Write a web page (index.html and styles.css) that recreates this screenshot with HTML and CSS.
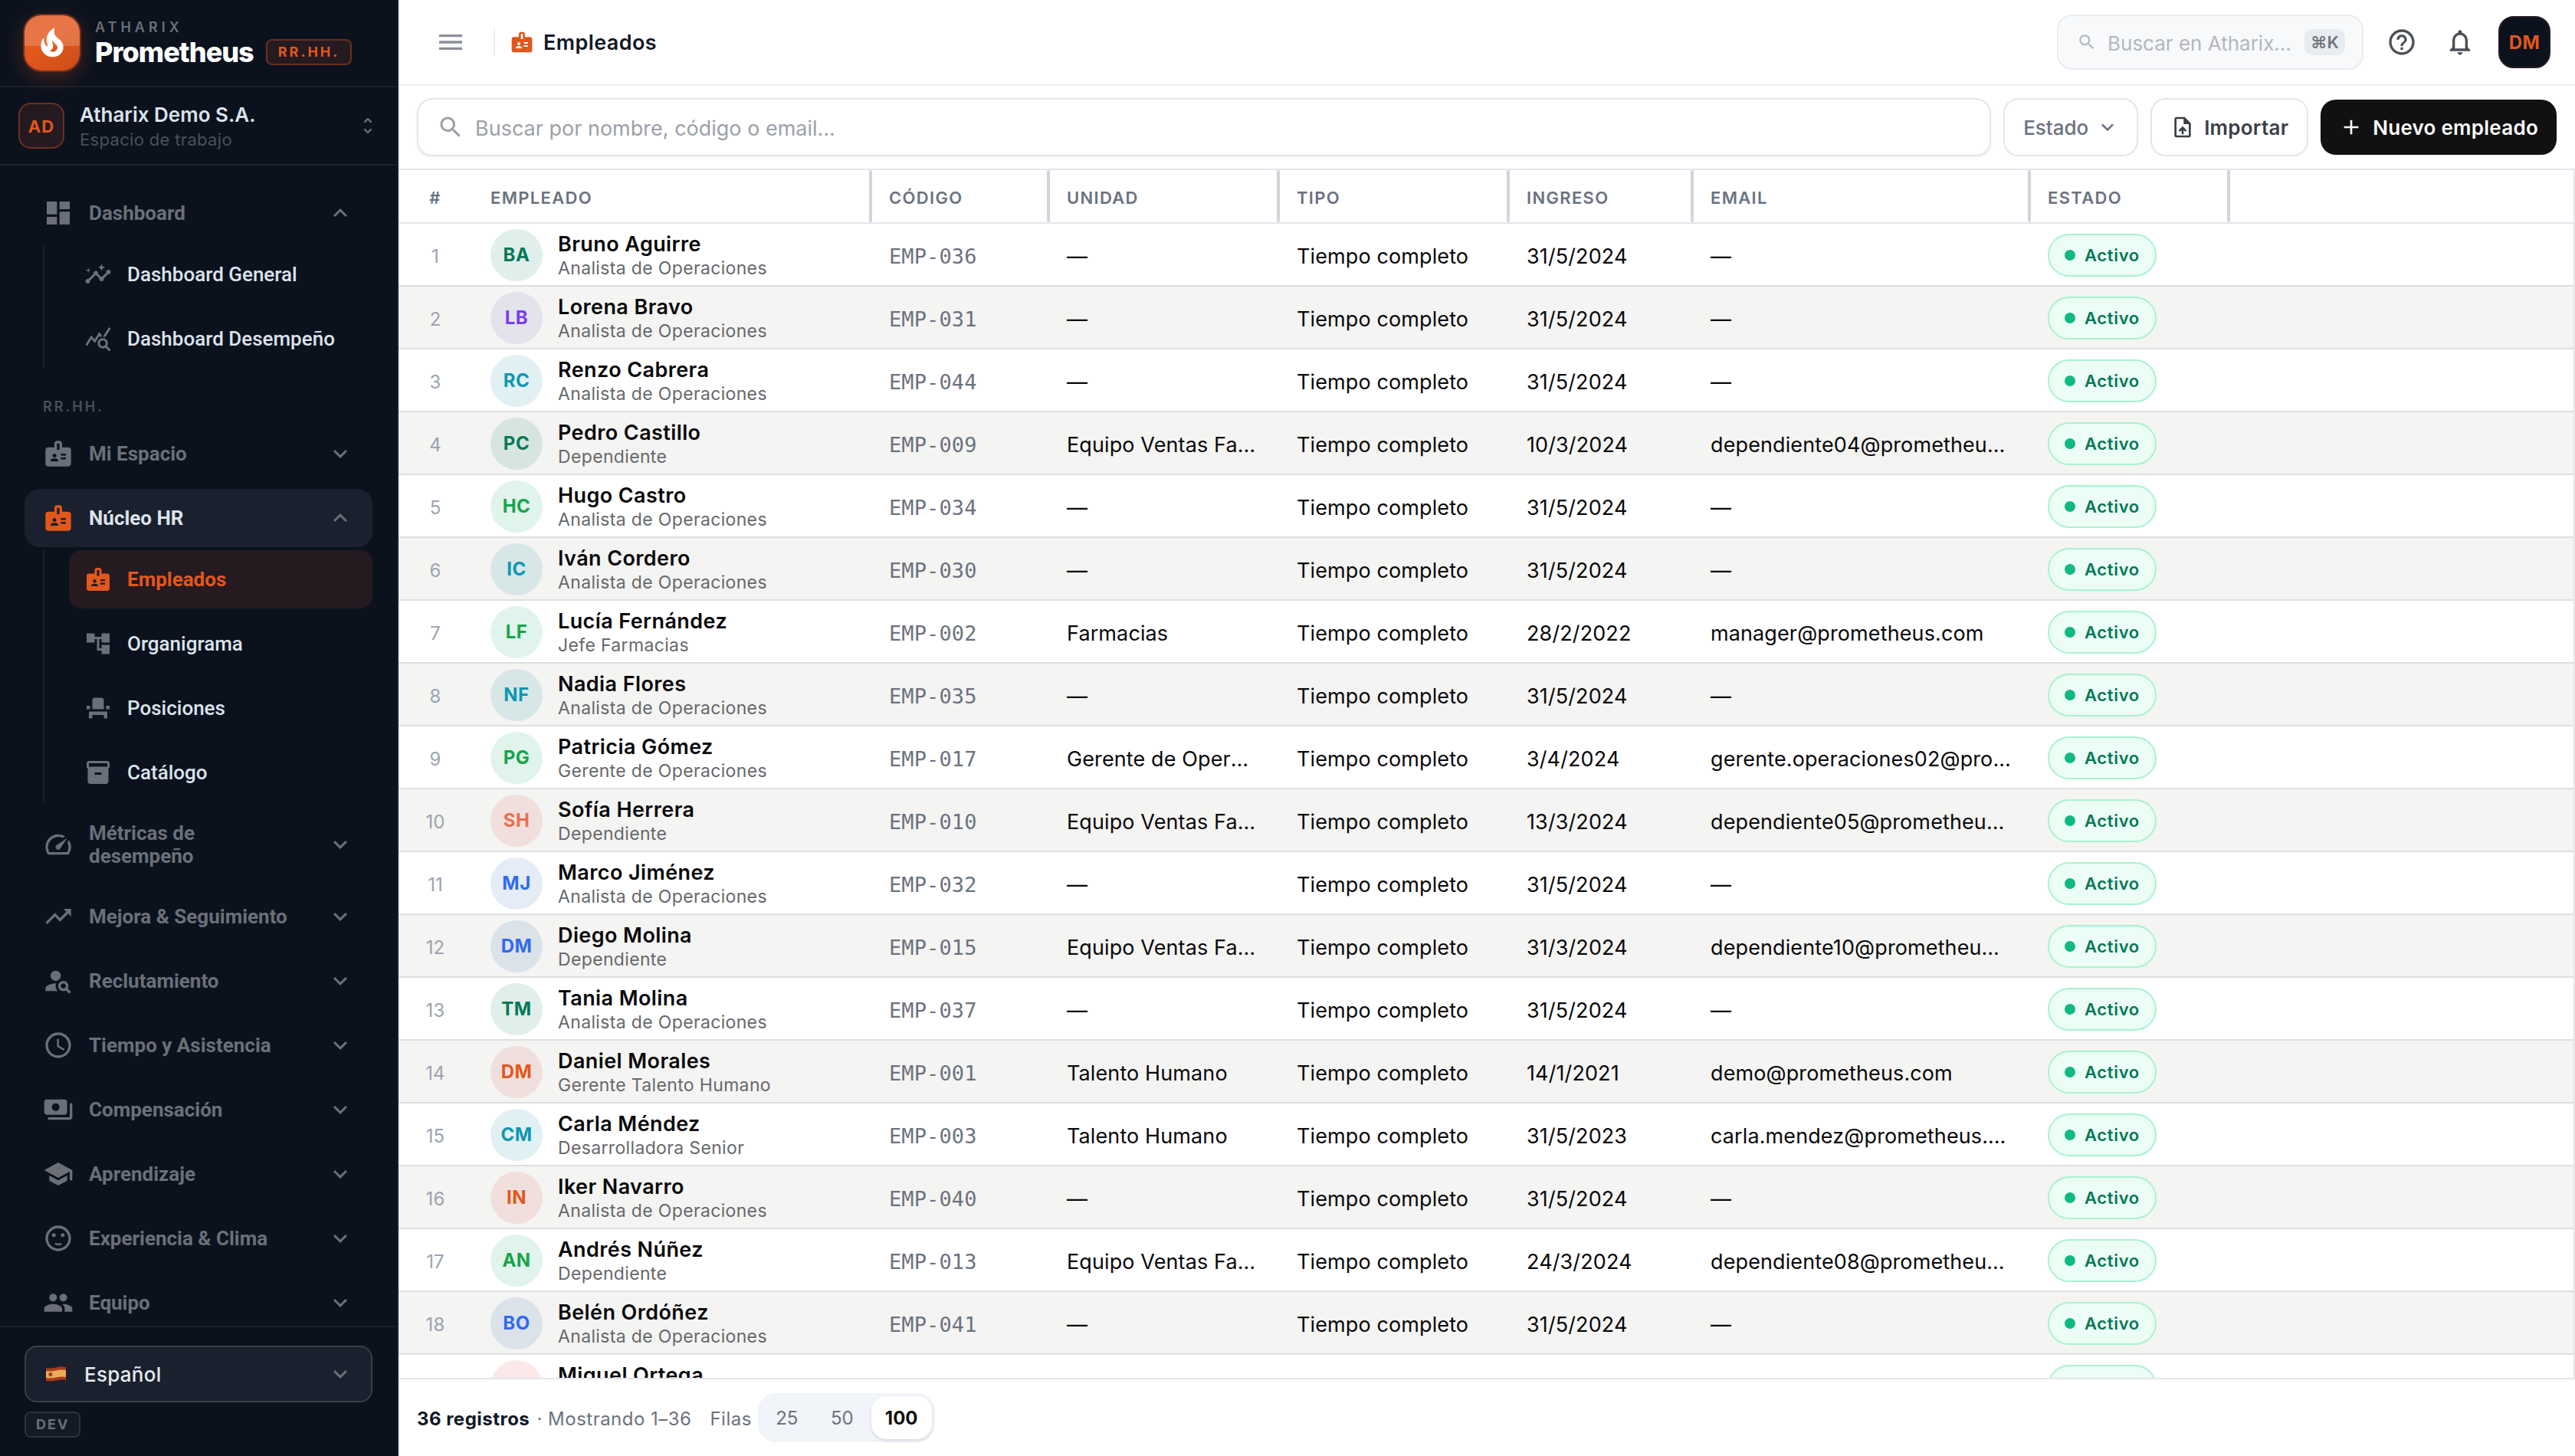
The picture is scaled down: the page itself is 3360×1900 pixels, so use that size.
FILE: index.html
```html
<!DOCTYPE html>
<html lang="es">
	<head>
		<meta charset="UTF-8">
		<title>Empleados - Prometheus</title>
		<link rel="stylesheet" href="styles.css">
	</head>
	<body>
		<!-- icon sprite -->
		<svg class="sprite">
			<symbol id="fire" viewBox="0 0 24 24"><path d="M19.48 12.35c-1.57-4.08-7.16-4.3-5.81-10.23.1-.44-.37-.78-.75-.55C9.29 3.71 6.68 8 8.87 13.62c.18.46-.36.89-.75.59-1.81-1.37-2-3.34-1.84-4.75.06-.52-.62-.77-.91-.34C4.69 10.16 4 11.84 4 14.37c.38 5.6 5.11 7.32 6.81 7.54 2.43.31 5.06-.14 6.95-1.87 2.08-1.93 2.84-5.01 1.72-7.69zm-9.28 5.03c1.44-.35 2.18-1.39 2.38-2.31.33-1.43-.96-2.83-.09-5.09.33 1.87 3.27 3.04 3.27 5.08.08 2.53-2.66 4.7-5.56 2.32z"/></symbol>
			<symbol id="unfold" viewBox="0 0 24 24"><path d="M12 5.83L15.17 9l1.41-1.41L12 3 7.41 7.59 8.83 9 12 5.83zm0 12.34L8.83 15l-1.41 1.41L12 21l4.59-4.59L15.17 15 12 18.17z"/></symbol>
			<symbol id="more" viewBox="0 0 24 24"><path d="M16.59 8.59L12 13.17 7.41 8.59 6 10l6 6 6-6z"/></symbol>
			<symbol id="less" viewBox="0 0 24 24"><path d="M12 8l-6 6 1.41 1.41L12 10.83l4.59 4.58L18 14z"/></symbol>
			<symbol id="dashboard" viewBox="0 0 24 24"><path d="M3 13h8V3H3v10zm0 8h8v-6H3v6zm10 0h8V11h-8v10zm0-18v6h8V3h-8z"/></symbol>
			<symbol id="insights" viewBox="0 0 24 24"><path d="M21 8c-1.45 0-2.26 1.44-1.93 2.51l-3.55 3.56c-.3-.09-.74-.09-1.04 0l-2.55-2.55C12.27 10.45 11.46 9 10 9c-1.45 0-2.27 1.44-1.93 2.52l-4.56 4.55C2.44 15.74 1 16.55 1 18c0 1.1.9 2 2 2 1.45 0 2.26-1.44 1.93-2.51l4.55-4.56c.3.09.74.09 1.04 0l2.55 2.55C12.73 16.55 13.54 18 15 18c1.45 0 2.27-1.44 1.93-2.52l3.56-3.55C21.56 12.26 23 11.45 23 10c0-1.1-.9-2-2-2z"/><path d="M15 9l.94-2.07L18 6l-2.06-.93L15 3l-.92 2.07L12 6l2.08.93zM3.5 11L4 9l2-.5L4 8l-.5-2L3 8l-2 .5L3 9z"/></symbol>
			<symbol id="stats" viewBox="0 0 24 24"><path d="M19.88 18.47c.44-.7.7-1.51.7-2.39 0-2.49-2.01-4.5-4.5-4.5s-4.5 2.01-4.5 4.5 2.01 4.5 4.49 4.5c.88 0 1.7-.26 2.39-.7L21.58 23 23 21.58l-3.12-3.11zm-3.8.11c-1.38 0-2.5-1.12-2.5-2.5s1.12-2.5 2.5-2.5 2.5 1.12 2.5 2.5-1.12 2.5-2.5 2.5zM15.72 10.08c-.74.02-1.45.18-2.1.45l-.55-.83-3.8 6.18-3.01-3.52-3.63 5.81L1 17l5-8 3 3.5L13 6l2.72 4.08zm2.59.5c-.64-.28-1.33-.45-2.05-.49L21.38 2 23 3.18l-4.69 7.4z"/></symbol>
			<symbol id="badge" viewBox="0 0 24 24"><path d="M20 7h-5V4c0-1.1-.9-2-2-2h-2c-1.1 0-2 .9-2 2v3H4c-1.1 0-2 .9-2 2v11c0 1.1.9 2 2 2h16c1.1 0 2-.9 2-2V9c0-1.1-.9-2-2-2zM9 12c.83 0 1.5.67 1.5 1.5S9.83 15 9 15s-1.5-.67-1.5-1.5S8.17 12 9 12zm3 6H6v-.75c0-1 2-1.5 3-1.5s3 .5 3 1.5V18zm1-9h-2V4h2v5zm5 7.5h-4V15h4v1.5zm0-3h-4V12h4v1.5z"/></symbol>
			<symbol id="tree" viewBox="0 0 24 24"><path d="M22 11V3h-7v3H9V3H2v8h7V8h2v10h4v3h7v-8h-7v3h-2V8h2v3z"/></symbol>
			<symbol id="seat" viewBox="0 0 24 24"><path d="M4 18v3h3v-3h10v3h3v-6H4zm15-8h3v3h-3zM2 10h3v3H2zm15 3H7V5c0-1.1.9-2 2-2h6c1.1 0 2 .9 2 2v8z"/></symbol>
			<symbol id="box" viewBox="0 0 24 24"><path d="M20 2H4c-1 0-2 .9-2 2v3.01c0 .72.43 1.34 1 1.69V20c0 1.1 1.1 2 2 2h14c.9 0 2-.9 2-2V8.7c.57-.35 1-.97 1-1.69V4c0-1.1-1-2-2-2zm-5 12H9v-2h6v2zm5-7H4V4l16-.02V7z"/></symbol>
			<symbol id="speed" viewBox="0 0 24 24"><path d="M20.38 8.57l-1.23 1.85a8 8 0 0 1-.22 7.58H5.07A8 8 0 0 1 15.58 6.85l1.85-1.23A10 10 0 0 0 3.35 19a2 2 0 0 0 1.72 1h13.85a2 2 0 0 0 1.74-1 10 10 0 0 0-.27-10.44zm-9.79 6.84a2 2 0 0 0 2.83 0l5.66-8.49-8.49 5.66a2 2 0 0 0 0 2.83z"/></symbol>
			<symbol id="trending" viewBox="0 0 24 24"><path d="M16 6l2.29 2.29-4.88 4.88-4-4L2 16.59 3.41 18l6-6 4 4 6.3-6.29L22 12V6z"/></symbol>
			<symbol id="recruit" viewBox="0 0 24 24"><circle cx="10" cy="8" r="4"/><path d="M10.35 14.01C7.62 13.91 2 15.27 2 18v2h9.54c-2.47-2.76-1.23-5.89-1.19-5.99zM19.43 18.02c.36-.59.57-1.28.57-2.02 0-2.21-1.79-4-4-4s-4 1.79-4 4 1.79 4 4 4c.74 0 1.43-.22 2.02-.57L20.59 22 22 20.59l-2.57-2.57zM16 18c-1.1 0-2-.9-2-2s.9-2 2-2 2 .9 2 2-.9 2-2 2z"/></symbol>
			<symbol id="clock" viewBox="0 0 24 24"><path d="M11.99 2C6.47 2 2 6.48 2 12s4.47 10 9.99 10C17.52 22 22 17.52 22 12S17.52 2 11.99 2zM12 20c-4.42 0-8-3.58-8-8s3.58-8 8-8 8 3.58 8 8-3.58 8-8 8z"/><path d="M12.5 7H11v6l5.25 3.15.75-1.23-4.5-2.67z"/></symbol>
			<symbol id="payments" viewBox="0 0 24 24"><path d="M19 14V6c0-1.1-.9-2-2-2H3c-1.1 0-2 .9-2 2v8c0 1.1.9 2 2 2h14c1.1 0 2-.9 2-2zm-9-1c-1.66 0-3-1.34-3-3s1.34-3 3-3 3 1.34 3 3-1.34 3-3 3zm13-6v11c0 1.1-.9 2-2 2H4v-2h17V7h2z"/></symbol>
			<symbol id="school" viewBox="0 0 24 24"><path d="M5 13.18v4L12 21l7-3.82v-4L12 17l-7-3.82zM12 3L1 9l11 6 9-4.91V17h2V9L12 3z"/></symbol>
			<symbol id="smile" viewBox="0 0 24 24"><circle cx="15.5" cy="9.5" r="1.5"/><circle cx="8.5" cy="9.5" r="1.5"/><path d="M12 16c-.73 0-1.38-.18-1.96-.52-.12.14-.8.9-.94 1.03.84.6 1.83.99 2.9.99s2.07-.39 2.9-.99l-.94-1.03c-.58.34-1.23.52-1.96.52zM11.99 2C6.47 2 2 6.48 2 12s4.47 10 9.99 10C17.52 22 22 17.52 22 12S17.52 2 11.99 2zM12 20c-4.42 0-8-3.58-8-8s3.58-8 8-8 8 3.58 8 8-3.58 8-8 8z"/></symbol>
			<symbol id="group" viewBox="0 0 24 24"><path d="M16 11c1.66 0 2.99-1.34 2.99-3S17.66 5 16 5c-1.66 0-3 1.34-3 3s1.34 3 3 3zm-8 0c1.66 0 2.99-1.34 2.99-3S9.66 5 8 5C6.34 5 5 6.34 5 8s1.34 3 3 3zm0 2c-2.33 0-7 1.17-7 3.5V19h14v-2.5c0-2.33-4.67-3.5-7-3.5zm8 0c-.29 0-.62.02-.97.05 1.16.84 1.97 1.97 1.97 3.45V19h6v-2.5c0-2.33-4.67-3.5-7-3.5z"/></symbol>
			<symbol id="menu" viewBox="0 0 24 24"><path d="M3 18h18v-2H3v2zm0-5h18v-2H3v2zm0-7v2h18V6H3z"/></symbol>
			<symbol id="search" viewBox="0 0 24 24"><path d="M15.5 14h-.79l-.28-.27C15.41 12.59 16 11.11 16 9.5 16 5.91 13.09 3 9.5 3S3 5.91 3 9.5 5.91 16 9.5 16c1.61 0 3.09-.59 4.23-1.57l.27.28v.79l5 4.99L20.49 19l-4.99-5zm-6 0C7.01 14 5 11.99 5 9.5S7.01 5 9.5 5 14 7.01 14 9.5 11.99 14 9.5 14z"/></symbol>
			<symbol id="help" viewBox="0 0 24 24"><path d="M11 18h2v-2h-2v2zm1-16C6.48 2 2 6.48 2 12s4.48 10 10 10 10-4.48 10-10S17.52 2 12 2zm0 18c-4.41 0-8-3.59-8-8s3.59-8 8-8 8 3.59 8 8-3.59 8-8 8zm0-14c-2.21 0-4 1.79-4 4h2c0-1.1.9-2 2-2s2 .9 2 2c0 2-3 1.75-3 5h2c0-2.25 3-2.5 3-5 0-2.21-1.79-4-4-4z"/></symbol>
			<symbol id="bell" viewBox="0 0 24 24"><path d="M12 22c1.1 0 2-.9 2-2h-4c0 1.1.9 2 2 2zm6-6v-5c0-3.07-1.63-5.64-4.5-6.32V4c0-.83-.67-1.5-1.5-1.5s-1.5.67-1.5 1.5v.68C7.64 5.36 6 7.92 6 11v5l-2 2v1h16v-1l-2-2zm-2 1H8v-6c0-2.48 1.51-4.5 4-4.5s4 2.02 4 4.5v6z"/></symbol>
			<symbol id="upload" viewBox="0 0 24 24"><path d="M14 2H6c-1.1 0-1.99.9-1.99 2L4 20c0 1.1.89 2 1.99 2H18c1.1 0 2-.9 2-2V8l-6-6zm4 18H6V4h7v5h5v11zM8 15.01l1.41 1.41L11 14.84V19h2v-4.16l1.59 1.59L16 15.01 12.01 11 8 15.01z"/></symbol>
			<symbol id="add" viewBox="0 0 24 24"><path d="M19 13h-6v6h-2v-6H5v-2h6V5h2v6h6v2z"/></symbol>
			<symbol id="flag" viewBox="0 0 26 20"><path fill="#a93a1e" d="M0 2Q7 3 13 1.500T26 1V18Q20 17 13 18.500T0 19z"/><path fill="#ebab55" d="M0 6Q7 7 13 5.500T26 5V14Q20 13 13 14.500T0 15z"/><circle cx="6" cy="10.500" r="2.600" fill="#a93a1e"/><circle cx="8" cy="10.500" r="1" fill="#8c8f9c"/></symbol>
		</svg>

		<aside class="sidebar">
			<div class="brand">
				<div class="logo"><svg><use href="#fire"/></svg></div>
				<div class="brandtext">
					<span class="company">ATHARIX</span>
					<div class="product">Prometheus <span class="module">RR.HH.</span></div>
				</div>
			</div>
			<button class="workspace" type="button">
				<span class="wsicon">AD</span>
				<span class="wstext">
					<span class="wsname">Atharix Demo S.A.</span>
					<span class="wstype">Espacio de trabajo</span>
				</span>
				<svg class="icon28"><use href="#unfold"/></svg>
			</button>
			<nav class="nav">
				<button class="item" type="button"><svg class="icon40"><use href="#dashboard"/></svg><span>Dashboard</span><svg class="icon36"><use href="#less"/></svg></button>
				<div class="sub">
					<a href="#"><svg class="icon36"><use href="#insights"/></svg>Dashboard General</a>
					<a href="#"><svg class="icon36"><use href="#stats"/></svg>Dashboard Desempeño</a>
				</div>
				<div class="section">RR.HH.</div>
				<button class="item" type="button"><svg class="icon40"><use href="#badge"/></svg><span>Mi Espacio</span><svg class="icon36"><use href="#more"/></svg></button>
				<button class="item open" type="button"><svg class="icon40"><use href="#badge"/></svg><span>Núcleo HR</span><svg class="icon36"><use href="#less"/></svg></button>
				<div class="sub">
					<a class="active" href="#"><svg class="icon36"><use href="#badge"/></svg>Empleados</a>
					<a href="#"><svg class="icon36"><use href="#tree"/></svg>Organigrama</a>
					<a href="#"><svg class="icon36"><use href="#seat"/></svg>Posiciones</a>
					<a href="#"><svg class="icon36"><use href="#box"/></svg>Catálogo</a>
				</div>
				<button class="item" type="button"><svg class="icon40"><use href="#speed"/></svg><span>Métricas de desempeño</span><svg class="icon36"><use href="#more"/></svg></button>
				<button class="item" type="button"><svg class="icon40"><use href="#trending"/></svg><span>Mejora &amp; Seguimiento</span><svg class="icon36"><use href="#more"/></svg></button>
				<button class="item" type="button"><svg class="icon40"><use href="#recruit"/></svg><span>Reclutamiento</span><svg class="icon36"><use href="#more"/></svg></button>
				<button class="item" type="button"><svg class="icon40"><use href="#clock"/></svg><span>Tiempo y Asistencia</span><svg class="icon36"><use href="#more"/></svg></button>
				<button class="item" type="button"><svg class="icon40"><use href="#payments"/></svg><span>Compensación</span><svg class="icon36"><use href="#more"/></svg></button>
				<button class="item" type="button"><svg class="icon40"><use href="#school"/></svg><span>Aprendizaje</span><svg class="icon36"><use href="#more"/></svg></button>
				<button class="item" type="button"><svg class="icon40"><use href="#smile"/></svg><span>Experiencia &amp; Clima</span><svg class="icon36"><use href="#more"/></svg></button>
				<button class="item" type="button"><svg class="icon40"><use href="#group"/></svg><span>Equipo</span><svg class="icon36"><use href="#more"/></svg></button>
			</nav>
			<div class="sidefoot">
				<label class="lang">
					<svg class="flag"><use href="#flag"/></svg>
					<select aria-label="Idioma"><option>Español</option></select>
					<svg class="icon36"><use href="#more"/></svg>
				</label>
				<span class="env">DEV</span>
			</div>
		</aside>

		<main class="main">
			<header class="topbar">
				<button class="iconbtn menubtn" type="button" aria-label="Menú"><svg class="icon40"><use href="#menu"/></svg></button>
				<h1 class="pagetitle"><svg class="icon32"><use href="#badge"/></svg>Empleados</h1>
				<div class="topright">
					<label class="globalsearch">
						<svg class="icon26"><use href="#search"/></svg>
						<input type="text" placeholder="Buscar en Atharix..." aria-label="Buscar en Atharix">
						<kbd>⌘K</kbd>
					</label>
					<div class="actions">
						<button class="iconbtn" type="button" aria-label="Ayuda"><svg class="icon40"><use href="#help"/></svg></button>
						<button class="iconbtn" type="button" aria-label="Notificaciones"><svg class="icon40"><use href="#bell"/></svg></button>
					</div>
					<button class="user" type="button">DM</button>
				</div>
			</header>

			<div class="toolbar">
				<label class="search">
					<svg class="icon36"><use href="#search"/></svg>
					<input type="text" placeholder="Buscar por nombre, código o email..." aria-label="Buscar empleados">
				</label>
				<label class="filter">
					<select aria-label="Estado"><option>Estado</option></select>
					<svg class="icon32"><use href="#more"/></svg>
				</label>
				<button class="btn" type="button"><svg class="icon32"><use href="#upload"/></svg>Importar</button>
				<button class="btn primary" type="button"><svg class="icon32"><use href="#add"/></svg>Nuevo empleado</button>
			</div>

			<div class="tablewrap">
				<table>
					<colgroup>
						<col class="c-num"><col class="c-emp"><col class="c-cod"><col class="c-uni"><col class="c-tipo"><col class="c-ing"><col class="c-mail"><col class="c-est"><col>
					</colgroup>
					<thead>
						<tr><th class="num">#</th><th class="rs">Empleado</th><th class="rs">Código</th><th class="rs">Unidad</th><th class="rs">Tipo</th><th class="rs">Ingreso</th><th class="rs">Email</th><th class="rs">Estado</th><th></th></tr>
					</thead>
					<tbody>
						<tr>
							<td class="num">1</td>
							<td class="mid"><div class="person"><span class="av emerald">BA</span><div><b>Bruno Aguirre</b><small>Analista de Operaciones</small></div></div></td>
							<td class="code">EMP-036</td><td>—</td><td>Tiempo completo</td><td>31/5/2024</td><td>—</td><td class="mid"><span class="pill">Activo</span></td><td></td>
						</tr>
						<tr>
							<td class="num">2</td>
							<td class="mid"><div class="person"><span class="av violet">LB</span><div><b>Lorena Bravo</b><small>Analista de Operaciones</small></div></div></td>
							<td class="code">EMP-031</td><td>—</td><td>Tiempo completo</td><td>31/5/2024</td><td>—</td><td class="mid"><span class="pill">Activo</span></td><td></td>
						</tr>
						<tr>
							<td class="num">3</td>
							<td class="mid"><div class="person"><span class="av cyan">RC</span><div><b>Renzo Cabrera</b><small>Analista de Operaciones</small></div></div></td>
							<td class="code">EMP-044</td><td>—</td><td>Tiempo completo</td><td>31/5/2024</td><td>—</td><td class="mid"><span class="pill">Activo</span></td><td></td>
						</tr>
						<tr>
							<td class="num">4</td>
							<td class="mid"><div class="person"><span class="av emerald">PC</span><div><b>Pedro Castillo</b><small>Dependiente</small></div></div></td>
							<td class="code">EMP-009</td><td class="unit">Equipo Ventas Farmacias</td><td>Tiempo completo</td><td>10/3/2024</td><td>dependiente04@prometheus.com</td><td class="mid"><span class="pill">Activo</span></td><td></td>
						</tr>
						<tr>
							<td class="num">5</td>
							<td class="mid"><div class="person"><span class="av green">HC</span><div><b>Hugo Castro</b><small>Analista de Operaciones</small></div></div></td>
							<td class="code">EMP-034</td><td>—</td><td>Tiempo completo</td><td>31/5/2024</td><td>—</td><td class="mid"><span class="pill">Activo</span></td><td></td>
						</tr>
						<tr>
							<td class="num">6</td>
							<td class="mid"><div class="person"><span class="av cyan">IC</span><div><b>Iván Cordero</b><small>Analista de Operaciones</small></div></div></td>
							<td class="code">EMP-030</td><td>—</td><td>Tiempo completo</td><td>31/5/2024</td><td>—</td><td class="mid"><span class="pill">Activo</span></td><td></td>
						</tr>
						<tr>
							<td class="num">7</td>
							<td class="mid"><div class="person"><span class="av green">LF</span><div><b>Lucía Fernández</b><small>Jefe Farmacias</small></div></div></td>
							<td class="code">EMP-002</td><td class="unit">Farmacias</td><td>Tiempo completo</td><td>28/2/2022</td><td>manager@prometheus.com</td><td class="mid"><span class="pill">Activo</span></td><td></td>
						</tr>
						<tr>
							<td class="num">8</td>
							<td class="mid"><div class="person"><span class="av cyan">NF</span><div><b>Nadia Flores</b><small>Analista de Operaciones</small></div></div></td>
							<td class="code">EMP-035</td><td>—</td><td>Tiempo completo</td><td>31/5/2024</td><td>—</td><td class="mid"><span class="pill">Activo</span></td><td></td>
						</tr>
						<tr>
							<td class="num">9</td>
							<td class="mid"><div class="person"><span class="av green">PG</span><div><b>Patricia Gómez</b><small>Gerente de Operaciones</small></div></div></td>
							<td class="code">EMP-017</td><td class="unit">Gerente de Operaciones</td><td>Tiempo completo</td><td>3/4/2024</td><td>gerente.operaciones02@prometheus.com</td><td class="mid"><span class="pill">Activo</span></td><td></td>
						</tr>
						<tr>
							<td class="num">10</td>
							<td class="mid"><div class="person"><span class="av coral">SH</span><div><b>Sofía Herrera</b><small>Dependiente</small></div></div></td>
							<td class="code">EMP-010</td><td class="unit">Equipo Ventas Farmacias</td><td>Tiempo completo</td><td>13/3/2024</td><td>dependiente05@prometheus.com</td><td class="mid"><span class="pill">Activo</span></td><td></td>
						</tr>
						<tr>
							<td class="num">11</td>
							<td class="mid"><div class="person"><span class="av blue">MJ</span><div><b>Marco Jiménez</b><small>Analista de Operaciones</small></div></div></td>
							<td class="code">EMP-032</td><td>—</td><td>Tiempo completo</td><td>31/5/2024</td><td>—</td><td class="mid"><span class="pill">Activo</span></td><td></td>
						</tr>
						<tr>
							<td class="num">12</td>
							<td class="mid"><div class="person"><span class="av blue">DM</span><div><b>Diego Molina</b><small>Dependiente</small></div></div></td>
							<td class="code">EMP-015</td><td class="unit">Equipo Ventas Farmacias</td><td>Tiempo completo</td><td>31/3/2024</td><td class="unit">dependiente10@prometheus.com</td><td class="mid"><span class="pill">Activo</span></td><td></td>
						</tr>
						<tr>
							<td class="num">13</td>
							<td class="mid"><div class="person"><span class="av emerald">TM</span><div><b>Tania Molina</b><small>Analista de Operaciones</small></div></div></td>
							<td class="code">EMP-037</td><td>—</td><td>Tiempo completo</td><td>31/5/2024</td><td>—</td><td class="mid"><span class="pill">Activo</span></td><td></td>
						</tr>
						<tr>
							<td class="num">14</td>
							<td class="mid"><div class="person"><span class="av orange">DM</span><div><b>Daniel Morales</b><small>Gerente Talento Humano</small></div></div></td>
							<td class="code">EMP-001</td><td class="unit">Talento Humano</td><td>Tiempo completo</td><td>14/1/2021</td><td>demo@prometheus.com</td><td class="mid"><span class="pill">Activo</span></td><td></td>
						</tr>
						<tr>
							<td class="num">15</td>
							<td class="mid"><div class="person"><span class="av cyan">CM</span><div><b>Carla Méndez</b><small>Desarrolladora Senior</small></div></div></td>
							<td class="code">EMP-003</td><td class="unit">Talento Humano</td><td>Tiempo completo</td><td>31/5/2023</td><td>carla.mendez@prometheus.com</td><td class="mid"><span class="pill">Activo</span></td><td></td>
						</tr>
						<tr>
							<td class="num">16</td>
							<td class="mid"><div class="person"><span class="av orange">IN</span><div><b>Iker Navarro</b><small>Analista de Operaciones</small></div></div></td>
							<td class="code">EMP-040</td><td>—</td><td>Tiempo completo</td><td>31/5/2024</td><td>—</td><td class="mid"><span class="pill">Activo</span></td><td></td>
						</tr>
						<tr>
							<td class="num">17</td>
							<td class="mid"><div class="person"><span class="av green">AN</span><div><b>Andrés Núñez</b><small>Dependiente</small></div></div></td>
							<td class="code">EMP-013</td><td class="unit">Equipo Ventas Farmacias</td><td>Tiempo completo</td><td>24/3/2024</td><td>dependiente08@prometheus.com</td><td class="mid"><span class="pill">Activo</span></td><td></td>
						</tr>
						<tr>
							<td class="num">18</td>
							<td class="mid"><div class="person"><span class="av blue">BO</span><div><b>Belén Ordóñez</b><small>Analista de Operaciones</small></div></div></td>
							<td class="code">EMP-041</td><td>—</td><td>Tiempo completo</td><td>31/5/2024</td><td>—</td><td class="mid"><span class="pill">Activo</span></td><td></td>
						</tr>
						<tr>
							<td class="num">19</td>
							<td class="mid"><div class="person"><span class="av orange">MO</span><div><b>Miguel Ortega</b><small>Dependiente</small></div></div></td>
							<td class="code"></td><td></td><td></td><td></td><td></td><td class="mid"><span class="pill">Activo</span></td><td></td>
						</tr>
					</tbody>
				</table>
			</div>

			<footer class="pager">
				<span><b>36 registros</b> · Mostrando 1–36</span>
				<span class="rowslabel">Filas</span>
				<div class="sizes">
					<button type="button">25</button>
					<button type="button">50</button>
					<button class="on" type="button">100</button>
				</div>
			</footer>
		</main>
	</body>
</html>
```
FILE: styles.css
```css
*{
	box-sizing: border-box;
}
body{
	margin: 0;
	height: 100vh;
	display: flex;
	overflow: hidden;
	font-family: Inter, "Liberation Sans", sans-serif;
	font-size: 26px;
	color: #09090b;
	background: #fff;
}
button,input,select{
	font: inherit;
	color: inherit;
	border: 0;
	padding: 0;
	margin: 0;
	background: none;
	outline: none;
}
button{
	cursor: pointer;
}
select{
	appearance: none;
}
a{
	text-decoration: none;
	color: inherit;
}
svg{
	fill: currentColor;
	flex: none;
	display: block;
}
.sprite{
	display: none;
}
.icon26{ width: 26px; height: 26px; }
.icon28{ width: 28px; height: 28px; }
.icon32{ width: 32px; height: 32px; }
.icon36{ width: 36px; height: 36px; }
.icon40{ width: 40px; height: 40px; }

/* sidebar */
.sidebar{
	flex: none;
	width: 520px;
	display: flex;
	flex-direction: column;
	background: #0b121e;
	border-right: 2px solid #1a202d;
	color: #6b6f78;
}
.brand{
	height: 114px;
	flex: none;
	display: flex;
	align-items: center;
	gap: 20px;
	padding: 0 32px;
	border-bottom: 2px solid #1a202d;
}
.logo{
	width: 72px;
	height: 72px;
	border-radius: 22px;
	display: flex;
	align-items: center;
	justify-content: center;
	color: #fff;
	background: linear-gradient(rgba(255,255,255,.18) 55%, transparent 55%), linear-gradient(145deg, #e2571c 50%, #c94d18);
	box-shadow: 0 0 0 2px #6e2f1e, 0 8px 28px rgba(226,87,28,.3);
}
.logo svg{
	width: 44px;
	height: 44px;
}
.brandtext{
	display: flex;
	flex-direction: column;
}
.company{
	font-size: 18px;
	line-height: 24px;
	font-weight: 600;
	letter-spacing: 5px;
}
.product{
	display: flex;
	align-items: center;
	gap: 16px;
	font-size: 36px;
	line-height: 40px;
	font-weight: 800;
	letter-spacing: -1px;
	color: #fff;
}
.module{
	padding: 0 14px;
	font-size: 18px;
	line-height: 30px;
	font-weight: 700;
	letter-spacing: 3px;
	color: #e2571c;
	background: #241a20;
	border: 2px solid #6e2f1e;
	border-radius: 8px;
}
.workspace{
	height: 102px;
	flex: none;
	display: flex;
	align-items: center;
	gap: 20px;
	padding: 0 24px;
	text-align: left;
	border-bottom: 2px solid #1a202d;
}
.wsicon{
	width: 60px;
	height: 60px;
	line-height: 58px;
	border-radius: 16px;
	border: 2px solid #6e2f1e;
	background: #241a20;
	color: #e2571c;
	font-size: 22px;
	font-weight: 700;
	letter-spacing: 1px;
	text-align: center;
}
.wstext{
	flex: 1;
	display: flex;
	flex-direction: column;
	padding-top: 2px;
}
.wsname{
	font-weight: 600;
	line-height: 34px;
	color: #dbe3ec;
}
.wstype{
	font-size: 22px;
	line-height: 30px;
	letter-spacing: .015em;
	color: #4b4f58;
}
.nav{
	flex: 1;
	min-height: 0;
	overflow: hidden;
	display: flex;
	flex-direction: column;
	gap: 8px;
	padding: 24px 32px 0;
	font-family: Roboto, sans-serif;
}
.item{
	flex: none;
	min-height: 76px;
	display: flex;
	align-items: center;
	gap: 20px;
	padding: 18px 24px;
	border-radius: 20px;
	font-weight: 700;
	line-height: 30px;
	text-align: left;
}
.item span{
	flex: 1;
	padding-right: 24px;
}
.item.open{
	background: #1a202d;
	color: #dbe3ec;
}
.item.open svg:first-child{
	color: #e2571c;
}
.item.open svg:last-child{
	color: #6b6f78;
}
.sub{
	flex: none;
	display: flex;
	flex-direction: column;
	gap: 8px;
	margin: -4px 0 0 24px;
	padding-left: 32px;
	border-left: 2px solid #1a202d;
}
.sub a{
	height: 76px;
	display: flex;
	align-items: center;
	gap: 20px;
	padding: 0 20px;
	border-radius: 16px;
	font-weight: 500;
	color: #dbe3ec;
}
.sub a svg{
	color: #6b6f78;
}
.sub a.active{
	font-weight: 700;
	color: #e2571c;
	background: #241a20;
}
.sub a.active svg{
	color: #e2571c;
}
.section{
	flex: none;
	padding: 30px 24px 2px;
	font-family: Inter, sans-serif;
	font-size: 18px;
	line-height: 26px;
	font-weight: 600;
	letter-spacing: 3px;
	color: #4b4f58;
}
.sidefoot{
	flex: none;
	display: flex;
	flex-direction: column;
	align-items: flex-start;
	gap: 12px;
	padding: 24px 32px;
	border-top: 2px solid #1a202d;
}
.lang{
	align-self: stretch;
	height: 74px;
	display: flex;
	align-items: center;
	gap: 24px;
	padding: 0 22px 0 26px;
	border: 2px solid #3a3e47;
	border-radius: 16px;
	background: #1a202d;
}
.lang select{
	flex: 1;
	font-weight: 500;
	letter-spacing: .01em;
	color: #e6e9ee;
}
.flag{
	width: 26px;
	height: 20px;
}
.env{
	padding: 0 13px;
	font-size: 18px;
	line-height: 30px;
	font-weight: 700;
	letter-spacing: 2px;
	border: 2px solid #2c313b;
	border-radius: 8px;
	background: #131a26;
}

/* main */
.main{
	flex: 1;
	min-width: 0;
	display: flex;
	flex-direction: column;
}
.topbar{
	height: 112px;
	flex: none;
	display: flex;
	align-items: center;
	padding: 0 32px 0 34px;
	border-bottom: 2px solid #e8ecf1;
}
.iconbtn{
	width: 68px;
	height: 68px;
	display: flex;
	align-items: center;
	justify-content: center;
	color: #4b4f58;
}
.menubtn{
	color: #8b8f99;
}
.pagetitle{
	display: flex;
	align-items: center;
	gap: 12px;
	height: 36px;
	margin: 0 0 0 22px;
	padding-left: 19px;
	border-left: 2px solid #e8ecf1;
	font-size: 27px;
	font-weight: 600;
	letter-spacing: .015em;
	color: #111827;
}
.pagetitle svg{
	color: #e2571c;
}
.topright{
	flex: 1;
	display: flex;
	align-items: center;
	justify-content: flex-end;
	gap: 16px;
}
.globalsearch{
	width: 400px;
	height: 72px;
	display: flex;
	align-items: center;
	gap: 14px;
	padding: 0 22px 0 24px;
	border: 2px solid #e8ecf1;
	border-radius: 20px;
	background: #f7f9fb;
	color: #b4b7bc;
}
.globalsearch input{
	flex: 1;
	min-width: 0;
}
input{
	padding-top: 2px;
}
input::placeholder{
	color: inherit;
	opacity: 1;
}
kbd{
	padding: 0 8px;
	border-radius: 10px;
	background: #e8ecf1;
	color: #71757d;
	font-family: Inter, "DejaVu Sans", sans-serif;
	font-size: 22px;
	line-height: 34px;
	font-weight: 600;
}
.actions{
	display: flex;
	gap: 8px;
}
.user{
	width: 68px;
	height: 68px;
	border-radius: 20px;
	border: 2px solid #241a20;
	background: #0b121e;
	color: #e2571c;
	font-size: 24px;
	font-weight: 700;
	letter-spacing: .02em;
}
.toolbar{
	flex: none;
	display: flex;
	align-items: center;
	gap: 16px;
	padding: 16px 24px;
}
.search,.filter,.btn{
	height: 76px;
	display: flex;
	align-items: center;
	border: 2px solid #e4e6ec;
	border-radius: 20px;
	letter-spacing: .01em;
}
.search{
	flex: 1;
	gap: 14px;
	padding: 0 24px;
	color: #9ca0a8;
	box-shadow: 0 2px 4px rgba(16,24,40,.05);
}
.search input{
	flex: 1;
	font-size: 27px;
}
.filter{
	gap: 8px;
	padding: 0 22px 0 24px;
	color: #6b7280;
	font-weight: 500;
}
.btn{
	gap: 12px;
	padding: 0 24px;
	font-weight: 600;
	color: #3a3e47;
}
.btn.primary{
	height: 72px;
	border: 0;
	background: #111;
	color: #fff;
}

/* table */
.tablewrap{
	flex: 1;
	min-height: 0;
	overflow: hidden;
	border-top: 2px solid #e4e6ec;
	border-right: 2px solid #e4e6ec;
}
table{
	width: 100%;
	table-layout: fixed;
	border-collapse: separate;
	border-spacing: 0;
}
.c-num{ width: 96px; }
.c-emp{ width: 520px; }
.c-cod{ width: 232px; }
.c-uni{ width: 300px; }
.c-tipo{ width: 300px; }
.c-ing{ width: 240px; }
.c-mail{ width: 440px; }
.c-est{ width: 260px; }
th{
	height: 70px;
	padding: 4px 24px 0;
	position: relative;
	text-align: left;
	text-transform: uppercase;
	font-size: 22px;
	font-weight: 600;
	letter-spacing: .06em;
	color: #6b7280;
	border-bottom: 2px solid #e4e6ec;
}
/* resize handle */
.rs::after{
	content: "";
	position: absolute;
	top: 0;
	right: -2px;
	width: 4px;
	height: 100%;
	border-radius: 2px;
	background: #d1d5db;
	z-index: 1;
}
td{
	height: 82px;
	padding: 4px 24px 0;
	font-size: 27px;
	letter-spacing: .004em;
	white-space: nowrap;
	overflow: hidden;
	text-overflow: ellipsis;
	border-bottom: 2px solid #dedfe0;
}
td.mid{
	padding-top: 2px;
}
td.unit{
	padding-right: 26px;
}
tbody tr:nth-child(even){
	background: #f4f4f2;
}
.num{
	text-align: center;
}
td.num{
	font-size: 24px;
	color: #9ca3af;
}
.code{
	font-family: "DejaVu Sans Mono", monospace;
	color: #6b7280;
}
.person{
	display: flex;
	align-items: center;
	gap: 20px;
}
.person div{
	padding-top: 2px;
}
.person b{
	display: block;
	font-weight: 600;
	line-height: 32px;
	letter-spacing: .015em;
}
.person small{
	display: block;
	font-size: 23px;
	line-height: 30px;
	letter-spacing: .015em;
	color: #66686c;
}
.av{
	flex: none;
	width: 68px;
	height: 68px;
	line-height: 68px;
	border-radius: 50%;
	text-align: center;
	font-size: 24px;
	font-weight: 700;
	letter-spacing: .02em;
}
.emerald{ color: #047857; background: rgba(4,120,87,.12); }
.violet{ color: #7c3aed; background: rgba(95,110,190,.12); }
.cyan{ color: #0e96b4; background: rgba(8,140,160,.12); }
.green{ color: #16a34a; background: rgba(16,170,110,.13); }
.coral{ color: #e87050; background: rgba(226,70,70,.12); }
.blue{ color: #2f6bed; background: rgba(40,100,170,.12); }
.orange{ color: #e2571c; background: rgba(226,70,70,.12); }
.pill{
	display: inline-flex;
	align-items: center;
	gap: 12px;
	min-width: 142px;
	height: 56px;
	padding: 0 20px;
	vertical-align: middle;
	border: 2px solid #a7f3d0;
	border-radius: 28px;
	background: #ecfdf5;
	color: #047857;
	font-size: 22px;
	font-weight: 600;
	letter-spacing: .03em;
}
.pill::before{
	content: "";
	width: 14px;
	height: 14px;
	border-radius: 50%;
	background: #10b981;
}

/* footer */
.pager{
	height: 102px;
	flex: none;
	display: flex;
	align-items: center;
	padding: 0 24px;
	border-top: 2px solid #e4e6ec;
	font-size: 24px;
	letter-spacing: .02em;
	color: #6b7280;
}
.pager span{
	padding-top: 2px;
}
.pager b{
	margin-right: 2px;
	font-weight: 700;
	color: #111827;
}
.rowslabel{
	margin: 0 8px 0 24px;
}
.sizes{
	display: flex;
	gap: 4px;
	padding: 4px;
	border-radius: 24px;
	background: #f1f4f9;
}
.sizes button{
	height: 56px;
	padding: 0 18px;
	min-width: 68px;
	border-radius: 20px;
}
.sizes .on{
	background: #fff;
	color: #111;
	font-weight: 700;
	box-shadow: 0 2px 4px rgba(16,24,40,.12);
}
```
